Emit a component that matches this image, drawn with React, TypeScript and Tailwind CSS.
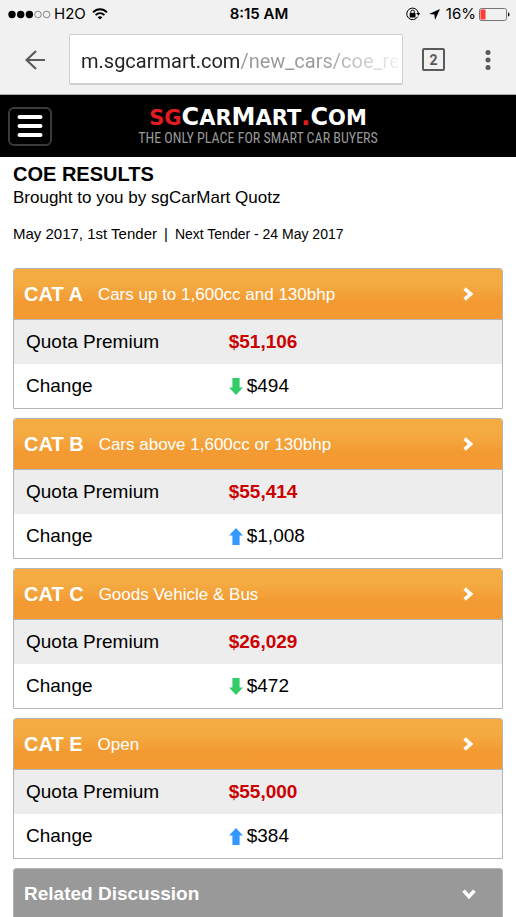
import React from 'react';

interface Category {
  name: string;
  description: string;
  premium: string;
  change: string;
  direction: 'up' | 'down';
}

const CATEGORIES: Category[] = [
  { name: 'CAT A', description: 'Cars up to 1,600cc and 130bhp', premium: '$51,106', change: '$494', direction: 'down' },
  { name: 'CAT B', description: 'Cars above 1,600cc or 130bhp', premium: '$55,414', change: '$1,008', direction: 'up' },
  { name: 'CAT C', description: 'Goods Vehicle & Bus', premium: '$26,029', change: '$472', direction: 'down' },
  { name: 'CAT E', description: 'Open', premium: '$55,000', change: '$384', direction: 'up' },
];

const StatusBar: React.FC = () => (
  <div className="grid h-6 grid-cols-3 items-center pt-1 pr-[6px] pl-2 font-['Inter',sans-serif] text-[15px] leading-5 text-black">
    <div className="flex items-center">
      <svg aria-hidden="true" width="43" height="9" viewBox="0 0 43 9" className="mr-[3px]">
        <circle cx="4" cy="4.5" r="3.7" />
        <circle cx="12.7" cy="4.5" r="3.7" />
        <circle cx="21.4" cy="4.5" r="3.7" />
        <circle cx="30" cy="4.5" r="3.3" fill="none" stroke="#555" strokeWidth="0.7" />
        <circle cx="38.6" cy="4.5" r="3.3" fill="none" stroke="#555" strokeWidth="0.7" />
      </svg>
      <span>H2O</span>
      <svg aria-hidden="true" width="16" height="12" viewBox="0 0 16 12" className="ml-1.5" fill="none" stroke="#000" strokeWidth="1.9">
        <path d="M1 4.3C5 .2 11 .2 15 4.3" />
        <path d="M3.6 7.1c2.6-2.6 6.2-2.6 8.8 0" />
        <path d="M8 11.6 5.6 9.2c1.4-1.3 3.4-1.3 4.8 0z" fill="#000" stroke="none" />
      </svg>
    </div>
    <div className="text-center font-semibold">8:15 AM</div>
    <div className="flex items-center justify-end">
      <svg aria-hidden="true" width="15" height="14" viewBox="0 0 15 14" className="mr-2">
        <path d="M11.7 9.6A5.8 5.8 0 1 1 12.3 6" fill="none" stroke="#000" strokeWidth="1" />
        <path d="M10.3 6h4l-2 2.7z" />
        <rect x="3.7" y="6" width="5.8" height="4.4" rx="0.5" />
        <path d="M4.9 6V4.8a1.7 1.7 0 0 1 3.4 0V6" fill="none" stroke="#000" strokeWidth="1" />
      </svg>
      <svg aria-hidden="true" width="11" height="11" viewBox="0 0 11 11" className="mr-1.5">
        <path d="M11 0 6 11 5.4 5.6 0 5z" />
      </svg>
      <span>16%</span>
      <svg aria-hidden="true" width="31" height="13" viewBox="0 0 31 13" className="ml-[3px]">
        <rect x="0.5" y="0.5" width="27" height="12" rx="2" fill="none" stroke="#777" />
        <rect x="1.5" y="1.5" width="5" height="10" fill="#ff3b30" />
        <path d="M29 4.5c2 .6 2 3.4 0 4z" />
      </svg>
    </div>
  </div>
);

const BrowserBar: React.FC = () => (
  <div className="flex items-center border-b border-[#aaa] pt-[10px] pr-[25px] pb-[9px] pl-6">
    <button type="button" aria-label="Back" className="mr-6 shrink-0">
      <svg width="21" height="20" viewBox="0 0 21 20" fill="none" stroke="#5a5a5a" strokeWidth="2.2">
        <path d="M21 10H3M12 1 2.6 10l9.4 9" />
      </svg>
    </button>
    <div className="min-w-0 flex-1 rounded-[2px] border border-b-2 border-[#cfcfcf] bg-white pr-1 pl-[11px]">
      <input
        type="text"
        aria-label="Address"
        defaultValue="m.sgcarmart.com/new_cars/coe_results"
        className="block h-12 w-full bg-[linear-gradient(90deg,#222_159px,#999_159px,#999_75%,#99999920_100%)] bg-clip-text pt-1 font-['Roboto',sans-serif] text-[20px] text-transparent outline-none"
      />
    </div>
    <button
      type="button"
      aria-label="2 open tabs"
      className="ml-[19px] flex size-[23px] shrink-0 items-center justify-center rounded-[2px] border-2 border-[#5a5a5a] font-['Roboto',sans-serif] text-sm font-bold text-[#5a5a5a]"
    >
      2
    </button>
    <button type="button" aria-label="Menu" className="ml-10 shrink-0">
      <svg width="6" height="20" viewBox="0 0 6 20" fill="#5a5a5a">
        <circle cx="3" cy="2.5" r="2.5" />
        <circle cx="3" cy="10" r="2.5" />
        <circle cx="3" cy="17.5" r="2.5" />
      </svg>
    </button>
  </div>
);

const SiteHeader: React.FC = () => (
  <header className="grid h-[62px] grid-cols-[45px_1fr_45px] items-center bg-black px-2">
    <button
      type="button"
      aria-label="Open menu"
      className="flex h-[39px] w-11 items-center justify-center rounded-md border-2 border-[#3a3a3a]"
    >
      <svg width="26" height="24" viewBox="0 0 26 24" stroke="#fff" strokeWidth="4" strokeLinecap="round">
        <path d="M2.5 3h21M2.5 12h21M2.5 21h21" />
      </svg>
    </button>
    <a href="#home" className="flex flex-col items-center pt-0.5 whitespace-nowrap">
      <span className="font-['DejaVu_Sans',sans-serif] text-[24px] leading-5 font-bold text-white">
        <span className="text-[21px] text-[#e31b23]">SG</span>C<span className="text-[21px]">AR</span>M
        <span className="text-[21px]">ART</span>
        <span className="text-[#e31b23]">.</span>C<span className="text-[21px]">OM</span>
      </span>
      <span className="font-['Roboto_Condensed','DejaVu_Sans_Condensed',sans-serif] text-[14px] leading-5 text-[#999]">
        THE ONLY PLACE FOR SMART CAR BUYERS
      </span>
    </a>
  </header>
);

const ChangeArrow: React.FC<{ direction: Category['direction'] }> = ({ direction }) =>
  direction === 'up' ? (
    <svg role="img" aria-label="Up" width="14" height="17" viewBox="0 0 14 17" fill="#3399ff">
      <path d="M7 0 14 7.5h-3.4V17H3.4V7.5H0z" />
    </svg>
  ) : (
    <svg role="img" aria-label="Down" width="14" height="17" viewBox="0 0 14 17" fill="#33cc66">
      <path d="M7 17 0 9.5h3.4V0h7.2v9.5H14z" />
    </svg>
  );

const CategoryCard: React.FC<{ category: Category }> = ({ category }) => (
  <section className="overflow-hidden rounded-t-[3px] border border-[#b5b5b5] bg-white">
    <a
      href="#details"
      className="flex h-[51px] items-center border-b border-[#b5b5b5] bg-linear-to-b from-[#f4ab42] from-30% to-[#f39a32] to-65% pr-7 pl-[10px] text-white"
    >
      <span className="mr-[15px] text-[20px] font-bold">{category.name}</span>
      <span className="flex-1 pt-0.5 text-[17px]">{category.description}</span>
      <svg aria-hidden="true" width="11" height="14" viewBox="0 0 11 14" fill="none" stroke="#fff" strokeWidth="3.6">
        <path d="M1.6 1.6 7.6 7l-6 5.4" />
      </svg>
    </a>
    <table className="w-full table-fixed text-left text-[19px] text-black">
      <tbody>
        <tr className="h-11 bg-[#ededed]">
          <th scope="row" className="w-[44%] pl-3 font-normal">Quota Premium</th>
          <td className="font-bold text-[#cc0000]">{category.premium}</td>
        </tr>
        <tr className="h-11">
          <th scope="row" className="pl-3 font-normal">Change</th>
          <td>
            <span className="flex items-center gap-1">
              <ChangeArrow direction={category.direction} />
              {category.change}
            </span>
          </td>
        </tr>
      </tbody>
    </table>
  </section>
);

export default function App() {
  return (
    <div className="h-screen overflow-hidden bg-white font-['Liberation_Sans',sans-serif] text-black">
      <div className="bg-[#f1f1f1]">
        <StatusBar />
        <BrowserBar />
      </div>
      <SiteHeader />
      <main className="px-[13px] pt-[5px]">
        <h1 className="text-[20px] leading-6 font-bold">COE RESULTS</h1>
        <p className="text-[17px] leading-6">Brought to you by sgCarMart Quotz</p>
        <p className="mt-3 flex items-baseline gap-[7px] text-[15px] leading-6">
          <span>May 2017, 1st Tender</span>
          <span>|</span>
          <span className="text-[14px]">Next Tender - 24 May 2017</span>
        </p>
        <div className="mt-[22px] flex flex-col gap-[9px]">
          {CATEGORIES.map(category => (
            <CategoryCard key={category.name} category={category} />
          ))}
          <button
            type="button"
            className="flex h-[52px] items-center justify-between rounded-t-[3px] border border-[#b5b5b5] bg-[#999] pr-[26px] pl-[10px] text-[19px] font-bold text-white"
          >
            Related Discussion
            <svg aria-hidden="true" width="14" height="11" viewBox="0 0 14 11" fill="none" stroke="#fff" strokeWidth="3.6">
              <path d="m1.6 1.6 5.4 6 5.4-6" />
            </svg>
          </button>
        </div>
      </main>
    </div>
  );
}
